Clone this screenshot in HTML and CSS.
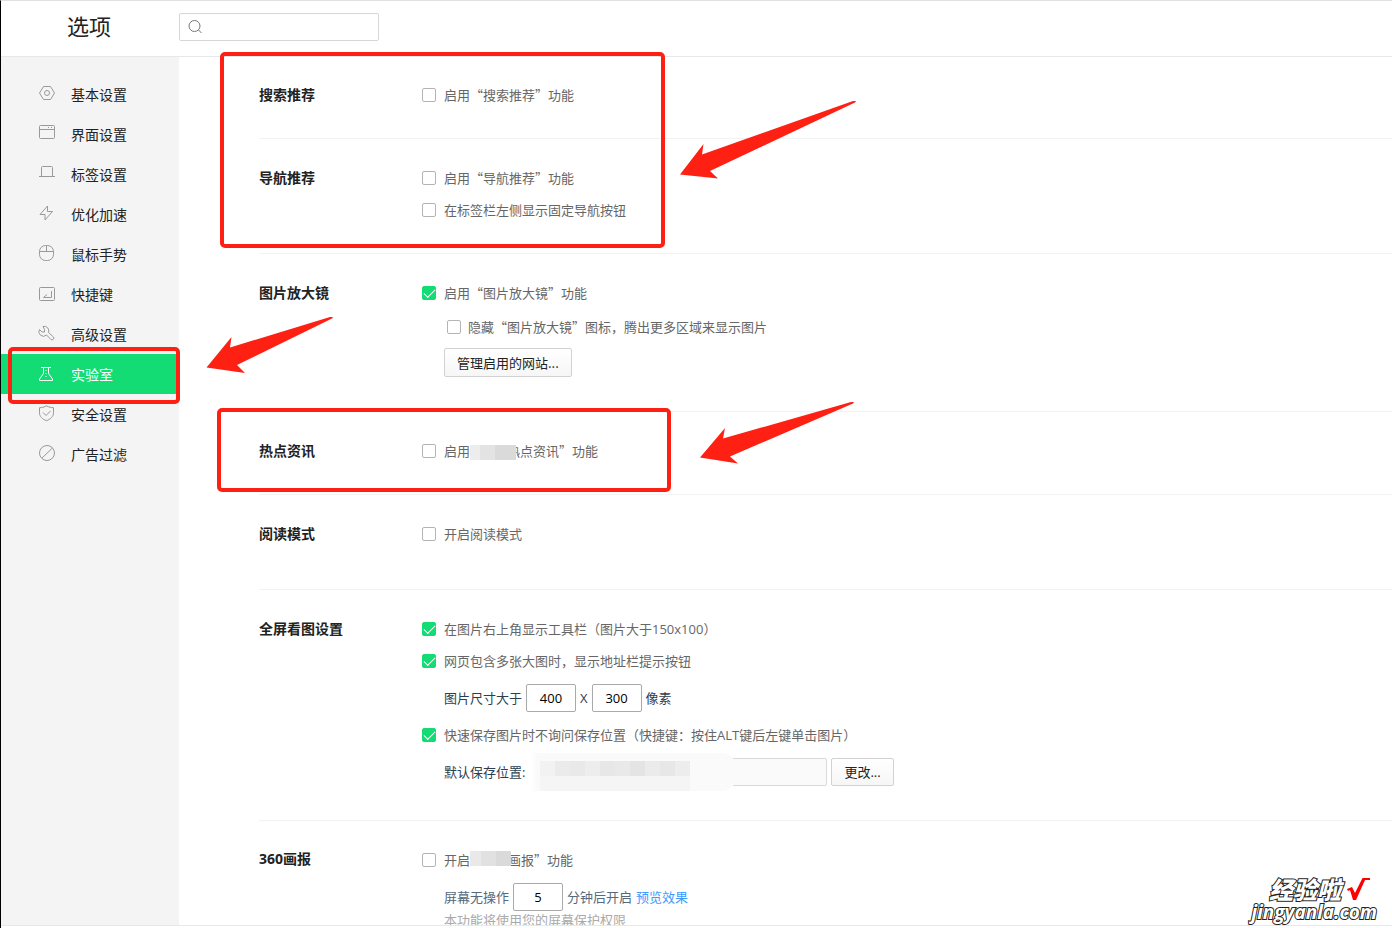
FILE: index.html
```html
<!DOCTYPE html>
<html lang="zh-CN">
<head>
<meta charset="utf-8">
<meta name="viewport" content="width=device-width, initial-scale=1">
<title>选项</title>
<link rel="stylesheet" href="styles.css">
</head>
<body>
<div class="app">
  <header class="header">
    <h1 class="title">选项</h1>
    <div class="search">
      <svg class="search-icon" width="16" height="16" viewBox="0 0 16 16"><circle cx="6.500" cy="7" r="5.500"/><path d="M10.500 11l3 3"/></svg>
      <input class="search-input" type="text" aria-label="搜索">
    </div>
  </header>
  <div class="body">
    <nav class="sidebar">
      <a class="nav-item" href="#"><svg class="icon" viewBox="0 0 18 18"><path d="M5.500 1.500h7L16.500 8l-4 6.500h-7L1.500 8z"/><circle cx="9" cy="8" r="2.500"/></svg>基本设置</a>
      <a class="nav-item" href="#"><svg class="icon" viewBox="0 0 18 18"><rect x="1.500" y=".5" width="15" height="13" rx="1"/><path d="M1.500 4.500h15M10 2.500h1M13 2.500h1"/></svg>界面设置</a>
      <a class="nav-item" href="#"><svg class="icon" viewBox="0 0 18 18"><path d="M3.500 11.500v-9a1 1 0 0 1 1-1h9a1 1 0 0 1 1 1v9M1 11.500h16"/></svg>标签设置</a>
      <a class="nav-item" href="#"><svg class="icon" viewBox="0 0 18 18"><path d="M9.500 1L2 9.500h5v5.500L14.500 6.500h-5z"/></svg>优化加速</a>
      <a class="nav-item" href="#"><svg class="icon" viewBox="0 0 18 18"><rect x="1.500" y=".5" width="14" height="15" rx="6"/><path d="M1.500 6.500h14M8.500 1v5.500"/></svg>鼠标手势</a>
      <a class="nav-item" href="#"><svg class="icon" viewBox="0 0 18 18"><rect x="1.500" y="2.500" width="15" height="13" rx="1"/><path d="M13.500 6v6.500H5.500L9 9.500"/></svg>快捷键</a>
      <a class="nav-item" href="#"><svg class="icon" viewBox="0 0 18 18"><path d="M5 1.500a4.500 4.500 0 0 1 5.500 6l5 4.500a1.800 1.800 0 0 1-2.500 2.500L8.500 10a4.500 4.500 0 0 1-7-5.500L4 7h2.500V4.500z"/></svg>高级设置</a>
      <a class="nav-item nav-item-active" href="#" aria-current="page"><svg class="icon" viewBox="0 0 18 18"><path d="M3 2.500h10M5.500 2.500v6L1.500 14v1.500h13V14l-4-5.500v-6M8 5v1M8 8v1M8 11v1"/></svg>实验室</a>
      <a class="nav-item" href="#"><svg class="icon" viewBox="0 0 18 18"><path d="M8.500.8C6.500 2 4 2.700 1.500 2.700v5c0 4 3 6.500 7 8 4-1.500 7-4 7-8v-5C13 2.700 10.500 2 8.500.8zM5 7.500l3 3L12.500 6"/></svg>安全设置</a>
      <a class="nav-item" href="#"><svg class="icon" viewBox="0 0 18 18"><circle cx="9" cy="8" r="7.500"/><path d="M4 13L14.500 3"/></svg>广告过滤</a>
    </nav>
    <main class="content">
      <section class="section">
        <h2 class="heading">搜索推荐</h2>
        <div class="options">
          <label class="row"><input class="check" type="checkbox">启用“搜索推荐”功能</label>
        </div>
      </section>
      <section class="section">
        <h2 class="heading">导航推荐</h2>
        <div class="options">
          <label class="row"><input class="check" type="checkbox">启用“导航推荐”功能</label>
          <label class="row"><input class="check" type="checkbox">在标签栏左侧显示固定导航按钮</label>
        </div>
      </section>
      <section class="section">
        <h2 class="heading">图片放大镜</h2>
        <div class="options">
          <label class="row"><input class="check" type="checkbox" checked>启用“图片放大镜”功能</label>
          <label class="row row-nested"><input class="check" type="checkbox">隐藏“图片放大镜”图标，腾出更多区域来显示图片</label>
          <div class="row-button"><button class="button" type="button">管理启用的网站...</button></div>
        </div>
      </section>
      <section class="section">
        <h2 class="heading">热点资讯</h2>
        <div class="options">
          <label class="row"><input class="check" type="checkbox"><span class="text">启用<span class="mosaic mosaic-news"></span>热点资讯”功能</span></label>
        </div>
      </section>
      <section class="section section-tall">
        <h2 class="heading">阅读模式</h2>
        <div class="options">
          <label class="row"><input class="check" type="checkbox">开启阅读模式</label>
        </div>
      </section>
      <section class="section">
        <h2 class="heading">全屏看图设置</h2>
        <div class="options latin">
          <label class="row"><input class="check" type="checkbox" checked>在图片右上角显示工具栏（图片大于150x100）</label>
          <label class="row"><input class="check" type="checkbox" checked>网页包含多张大图时，显示地址栏提示按钮</label>
          <div class="field">
            <label for="img-w">图片尺寸大于</label>
            <input class="number" id="img-w" type="text" value="400">
            <label for="img-h">X</label>
            <input class="number" id="img-h" type="text" value="300">
            <span>像素</span>
          </div>
          <label class="row"><input class="check" type="checkbox" checked>快速保存图片时不询问保存位置（快捷键：按住ALT键后左键单击图片）</label>
          <div class="field">
            <label for="path">默认保存位置:</label>
            <span class="path-box">
              <input class="path" id="path" type="text" readonly>
              <span class="blot"><span class="blot-cells"></span></span>
            </span>
            <button class="button" type="button">更改...</button>
          </div>
        </div>
      </section>
      <section class="section">
        <h2 class="heading heading-latin">360画报</h2>
        <div class="options">
          <label class="row"><input class="check" type="checkbox"><span class="text">开启<span class="mosaic mosaic-poster"></span>画报”功能</span></label>
          <div class="field field-muted latin">
            <label for="idle">屏幕无操作</label>
            <input class="number" id="idle" type="text" value="5">
            <span>分钟后开启</span>
            <a class="link" href="#">预览效果</a>
          </div>
          <p class="hint">本功能将使用您的屏幕保护权限</p>
        </div>
      </section>
    </main>
  </div>
</div>
<svg class="marks" aria-hidden="true">
  <g class="mark-box">
    <rect x="222" y="54" width="441" height="192" rx="3"/>
    <rect x="10" y="349" width="168" height="53" rx="3"/>
    <rect x="219" y="410" width="450" height="80" rx="3"/>
  </g>
  <g class="mark-arrow">
    <path d="M680 174.500L703.500 144 702 154.500 853 101l3 0-1 1.500L710 171l8 7.500z"/>
    <path d="M700 457.500L725 428l-2 10.500L851 402l3 0-1 1.500L730 456.500l8 7z"/>
    <path d="M206.500 367.500L231.500 337 230 347.500 330 317l3 0-1 1.500L237 365l8 8z"/>
  </g>
</svg>
<div class="watermark">
  <div class="watermark-top"><span>经验啦</span><svg width="24" height="24" viewBox="0 0 24 24"><path d="M1 12l5-2 3 6L16.500 1H24v2h-5L10 23H7L4 13l-2 1z"/></svg></div>
  <div class="watermark-site">jingyanla.com</div>
</div>
</body>
</html>
```

FILE: styles.css
```css
* { box-sizing: border-box; }

body {
  margin: 0;
  position: relative;
  overflow: hidden;
  background: #fff;
  color: #222;
  font: 13px/20px "Noto Sans CJK SC", sans-serif;
}

h1, h2, p { margin: 0; }
button, input { font: inherit; }
a { text-decoration: none; }

.latin, .number { font-family: "Open Sans", "Noto Sans CJK SC", sans-serif; }

.app {
  display: flex;
  flex-direction: column;
  height: 100vh;
  border-top: 1px solid #e1e1e1;
  border-left: 1px solid #000;
  padding-bottom: 2px;
}

.header {
  display: flex;
  flex: none;
  align-items: center;
  height: 56px;
  padding-bottom: 3px;
  border-bottom: 1px solid #e8e8e8;
}

.title {
  width: 178px;
  padding: 0 0 4px 66px;
  font-size: 22px;
  line-height: 32px;
  font-weight: 400;
}

.search {
  display: flex;
  align-items: center;
  gap: 4px;
  width: 200px;
  height: 28px;
  padding: 0 8px;
  border: 1px solid #d6d6d6;
  border-radius: 2px;
}

.search-icon { flex: none; fill: none; stroke: #777; }
.search-input { flex: 1; min-width: 0; border: 0; outline: 0; background: none; }

.body {
  display: flex;
  flex: 1;
  min-height: 0;
  border-bottom: 1px solid #e8e8e8;
}

.sidebar {
  flex: none;
  width: 178px;
  padding-top: 17px;
  background: #f4f4f4;
}

.nav-item {
  display: flex;
  align-items: center;
  gap: 15px;
  height: 40px;
  padding-left: 37px;
  color: #222;
  font-size: 14px;
}

.icon { width: 18px; height: 18px; fill: none; stroke: #999; }
.nav-item-active { background: #13dc74; color: #fff; }
.nav-item-active .icon { stroke: #fff; }

.content {
  flex: 1;
  min-width: 0;
  padding-left: 80px;
  overflow-y: auto;
  scrollbar-width: none;
}

.section {
  display: flex;
  padding: 23px 0 27px;
  border-bottom: 1px solid #f2f2f2;
}

.section:first-child { padding-top: 22px; }
.section-tall { padding-bottom: 39px; }

.heading {
  flex: none;
  width: 163px;
  font-size: 14px;
  line-height: 30px;
  font-weight: 700;
}

.heading-latin { font-family: "Noto Sans", "Noto Sans CJK SC", sans-serif; }

.options { flex: 1; color: #666; }

.row {
  display: flex;
  align-items: center;
  gap: 8px;
  width: fit-content;
  height: 32px;
}

.row-nested { height: 36px; padding-left: 25px; gap: 7px; }

.row-button {
  display: flex;
  align-items: center;
  height: 35px;
  margin-bottom: 4px;
  padding-left: 22px;
}

.check {
  flex: none;
  appearance: none;
  width: 14px;
  height: 14px;
  margin: 0;
  border: 1px solid #b4b4b4;
  border-radius: 2px;
  background: #fff;
}

.check:checked {
  position: relative;
  border-color: #13dc74;
  background: #13dc74;
}

.check:checked::after {
  content: "";
  position: absolute;
  left: 1px;
  top: 2px;
  width: 10px;
  height: 5px;
  border: solid #fff;
  border-width: 0 0 1px 1px;
  transform: rotate(-45deg);
}

.button {
  height: 28px;
  padding: 0 12px;
  border: 1px solid #d2d2d2;
  border-radius: 2px;
  background: linear-gradient(#fff, #f6f6f6);
  color: #222;
  line-height: 20px;
}

.row-button .button { height: 29px; }

.field {
  display: flex;
  align-items: center;
  gap: 4px;
  height: 42px;
  padding-left: 22px;
  color: #2c3e50;
}

.field-muted { color: #56697d; }

.number {
  width: 50px;
  height: 28px;
  padding: 0;
  border: 1px solid #aaa;
  border-radius: 2px;
  color: #000;
  text-align: center;
}

.link { color: #3d9bff; }
.hint { margin-top: -8px; padding-left: 22px; color: #aaa; }

.path-box { position: relative; display: flex; }

.path {
  width: 298px;
  height: 28px;
  border: 1px solid #d9d9d9;
  border-radius: 2px;
  background: #fafafa;
}

.blot {
  position: absolute;
  left: 0;
  top: -5px;
  width: 207px;
  height: 38px;
  padding: 8px 0 0 11px;
  border-radius: 0 14px 14px 0;
  background: linear-gradient(90deg, #fff 2px, #fafafa 8px);
}

.blot-cells {
  display: block;
  width: 150px;
  height: 30px;
  background:
    linear-gradient(90deg, #f2f2f2 15px, #ebebeb 15px 30px, #e9e9e9 30px 45px, #ededed 45px 60px, #e7e7e7 60px 75px, #e9e9e9 75px 90px, #e4e4e4 90px 105px, #ebebeb 105px 120px, #e7e7e7 120px 135px, #ededed 135px) 0 0 / 100% 15px no-repeat,
    #f5f5f5;
}

.mosaic {
  position: relative;
  display: inline-block;
  height: 15px;
  vertical-align: middle;
}

.mosaic-news {
  width: 46px;
  margin-right: -9px;
  background: linear-gradient(90deg, #ededed 10px, #e3e3e3 10px 25px, #dadada 25px);
}

.mosaic-poster {
  width: 41px;
  margin: 0 -3px 4px 0;
  background: linear-gradient(90deg, #e9e9e9 11px, #e1e1e1 11px 26px, #dadada 26px);
}

.marks {
  position: absolute;
  inset: 0;
  width: 100%;
  height: 100%;
  pointer-events: none;
}

.mark-box { fill: none; stroke: #ff2014; stroke-width: 4; }
.mark-arrow { fill: #ff2014; }

.watermark {
  position: absolute;
  right: 15px;
  bottom: 6px;
  color: #fff;
  font-weight: 900;
  -webkit-text-stroke: 2px #222;
  paint-order: stroke fill;
}

.watermark-top {
  display: flex;
  align-items: center;
  justify-content: flex-end;
  gap: 5px;
  padding-right: 7px;
  font-size: 24px;
  line-height: 26px;
  font-style: italic;
}

.watermark-top svg { fill: #f00; }

.watermark-site {
  font: italic 700 19px/20px "Open Sans", sans-serif;
}
```
